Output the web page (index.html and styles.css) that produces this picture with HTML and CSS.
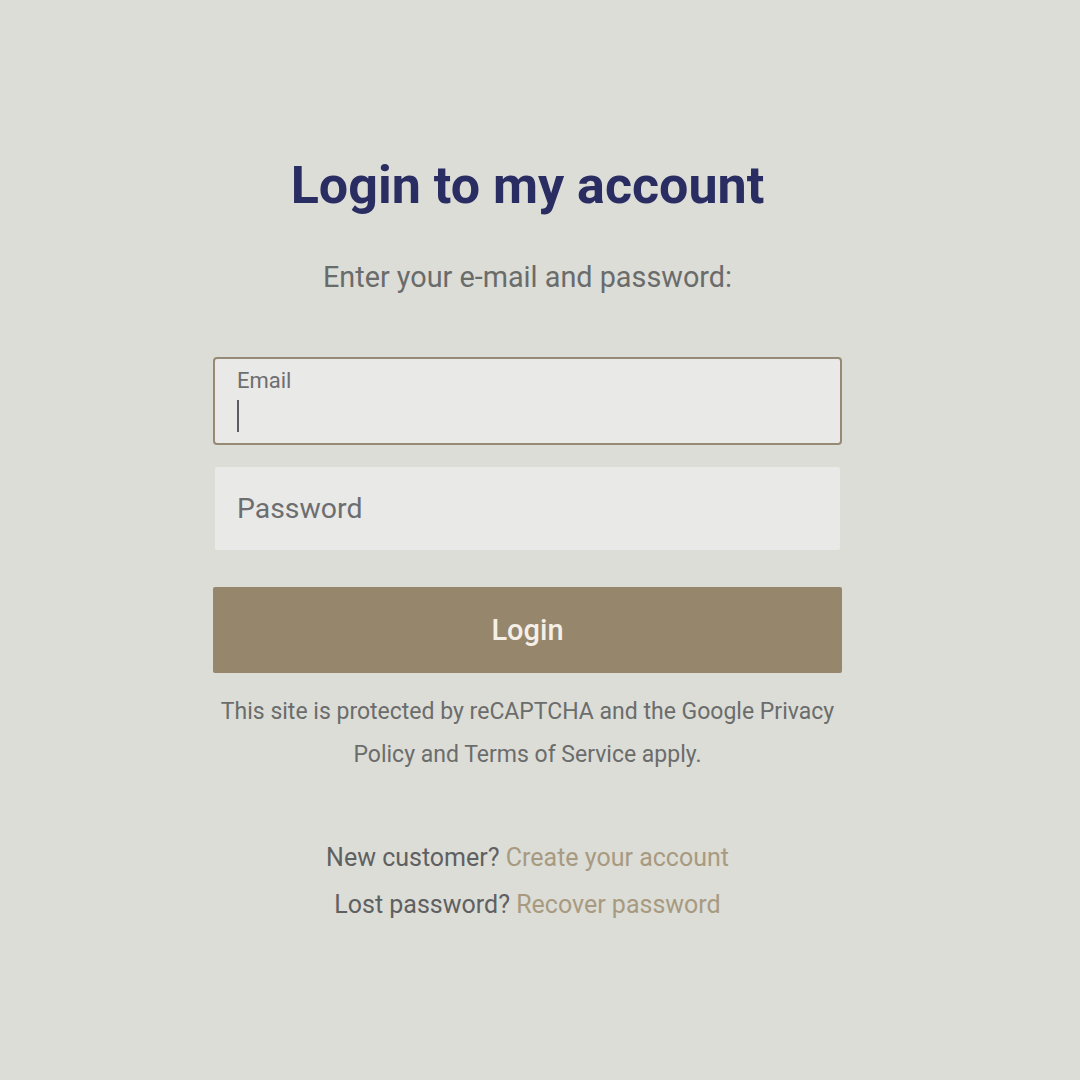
FILE: index.html
```html
<!DOCTYPE html>
<html lang="en">
<head>
    <meta charset="UTF-8">
    <meta name="viewport" content="width=device-width, initial-scale=1.0">
    <title>Login</title>
    <link rel="stylesheet" href="styles.css">
</head>
<body>
    <div class="page">
        <div class="login-box">
            <h1 class="login-title">Login to my account</h1>
            <p class="login-sub">Enter your e-mail and password:</p>

            <div class="field field-active">
                <span class="field-label">Email</span>
                <span class="caret"></span>
            </div>
            <div class="field field-plain">
                <span class="field-placeholder">Password</span>
            </div>

            <button class="login-button">Login</button>

            <p class="captcha-note">This site is protected by reCAPTCHA and the Google Privacy Policy and Terms of Service apply.</p>

            <div class="extra-links">
                <p>New customer? <a href="#">Create your account</a></p>
                <p>Lost password? <a href="#">Recover password</a></p>
            </div>
        </div>
    </div>
</body>
</html>
```

FILE: styles.css
```css
body {
    margin: 0;
    background: #dcddd7;
    font-family: Roboto, "Liberation Sans", sans-serif;
    height: 1080px;
    overflow: hidden;
}

.page {
    padding: 158px 238px 0 213px;
}

.login-box {
    display: flex;
    flex-direction: column;
    align-items: center;
    text-align: center;
}

.login-title {
    margin: 0;
    font-size: 52px;
    font-weight: 700;
    color: #2a2d62;
    line-height: 56px;
}

.login-sub {
    margin: 48px 0 0;
    font-size: 28.8px;
    color: #6a6b6b;
    line-height: 30px;
}

.field {
    box-sizing: border-box;
    width: 100%;
    background: #e9e9e8;
    text-align: left;
    display: flex;
    flex-direction: column;
}

.field-active {
    margin-top: 65px;
    height: 88px;
    padding: 9px 22px 0;
    border: 2px solid #978a74;
    border-radius: 4px;
}

.field-plain {
    width: calc(100% - 4px);
    height: 83px;
    margin-top: 22px;
    padding: 0 22px;
    border-radius: 2px;
    justify-content: center;
}

.field-label {
    font-size: 22px;
    color: #6d6e70;
    line-height: 26px;
}

.caret {
    display: block;
    width: 2px;
    height: 32px;
    margin-top: 6px;
    background: #5c5d60;
}

.field-placeholder {
    font-size: 28.4px;
    color: #6d6e70;
}

.login-button {
    width: 100%;
    height: 86px;
    margin-top: 37px;
    border: none;
    border-radius: 2px;
    background: #96866b;
    color: #f4efe7;
    font-family: inherit;
    font-size: 29px;
    font-weight: 500;
}

.captcha-note {
    margin: 17px 0 0;
    font-size: 23px;
    line-height: 43px;
    color: #6b6c6c;
}

.extra-links {
    margin-top: 58px;
}

.extra-links p {
    margin: 0;
    font-size: 25px;
    line-height: 47px;
    color: #5f6061;
}

.extra-links a {
    color: #a89a80;
    text-decoration: none;
}
```
